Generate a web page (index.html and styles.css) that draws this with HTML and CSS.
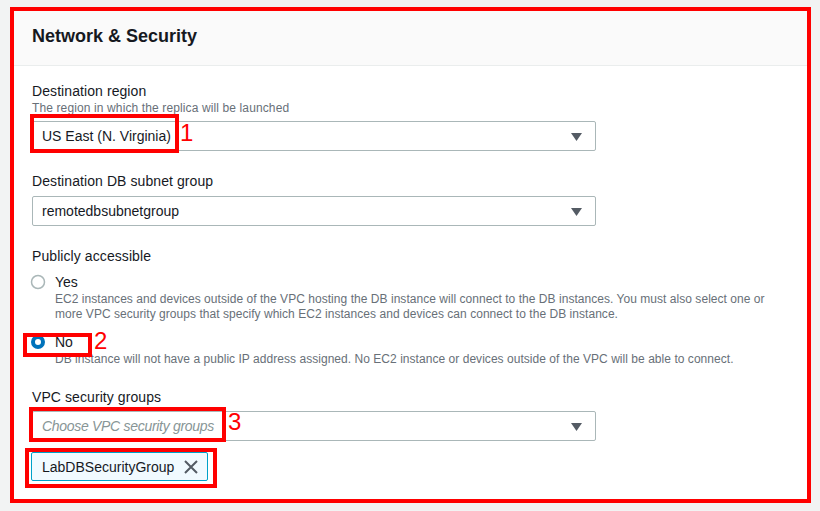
FILE: index.html
```html
<!DOCTYPE html>
<html lang="en">
<head>
<meta charset="utf-8">
<title>Network &amp; Security</title>
<link rel="stylesheet" href="styles.css">
</head>
<body>
<div class="page">
  <section class="card">
    <div class="card-header">
      <h2 class="card-title">Network &amp; Security</h2>
    </div>
    <div class="card-body">

      <div class="field">
        <div class="label">Destination region</div>
        <div class="desc desc-under-label">The region in which the replica will be launched</div>
        <div class="select">
          <span class="select-value">US East (N. Virginia)</span>
          <svg class="caret" width="11" height="8" viewBox="0 0 11 8"><polygon points="0,0 11,0 5.5,8" fill="#545b64"/></svg>
          <span class="mark mark-1"></span>
          <span class="num num-1">1</span>
        </div>
      </div>

      <div class="field">
        <div class="label">Destination DB subnet group</div>
        <div class="select">
          <span class="select-value">remotedbsubnetgroup</span>
          <svg class="caret" width="11" height="8" viewBox="0 0 11 8"><polygon points="0,0 11,0 5.5,8" fill="#545b64"/></svg>
        </div>
      </div>

      <div class="field">
        <div class="label">Publicly accessible</div>
        <div class="radio-item radio-first">
          <div class="radio-row">
            <svg class="radio" width="16" height="16" viewBox="0 0 16 16"><circle cx="8" cy="8" r="6.5" fill="#fff" stroke="#aab7b8" stroke-width="1.5"/></svg>
            <span class="radio-text">Yes</span>
          </div>
          <div class="desc radio-desc">EC2 instances and devices outside of the VPC hosting the DB instance will connect to the DB instances. You must also select one or more VPC security groups that specify which EC2 instances and devices can connect to the DB instance.</div>
        </div>
        <div class="radio-item radio-next">
          <div class="radio-row">
            <svg class="radio" width="16" height="16" viewBox="0 0 16 16"><circle cx="8" cy="8" r="5" fill="#fff" stroke="#0073bb" stroke-width="4"/></svg>
            <span class="radio-text">No</span>
            <span class="mark mark-2"></span>
            <span class="num num-2">2</span>
          </div>
          <div class="desc radio-desc">DB instance will not have a public IP address assigned. No EC2 instance or devices outside of the VPC will be able to connect.</div>
        </div>
      </div>

      <div class="field">
        <div class="label">VPC security groups</div>
        <div class="select select-tight">
          <span class="select-placeholder">Choose VPC security groups</span>
          <svg class="caret" width="11" height="8" viewBox="0 0 11 8"><polygon points="0,0 11,0 5.5,8" fill="#545b64"/></svg>
          <span class="mark mark-3"></span>
          <span class="num num-3">3</span>
        </div>
        <div class="token">
          <span class="token-text">LabDBSecurityGroup</span>
          <svg class="token-x" width="16" height="16" viewBox="0 0 16 16"><path d="M2 2 L14 14 M14 2 L2 14" stroke="#545b64" stroke-width="2" fill="none"/></svg>
          <span class="mark mark-4"></span>
        </div>
      </div>

    </div>
  </section>
</div>
</body>
</html>
```

FILE: styles.css
```css
html, body {
  margin: 0;
  padding: 0;
}

body {
  background: #f2f3f3;
  font-family: "Liberation Sans", Arial, sans-serif;
  color: #16191f;
}

.page {
  padding: 7px 9px 8px 10px;
}

.card {
  box-sizing: border-box;
  height: 496px;
  background: #ffffff;
  border: 4px solid #ff0000;
}

.card-header {
  box-sizing: border-box;
  height: 55px;
  padding: 14px 18px 0;
  background: #fafafa;
  border-bottom: 1px solid #eaeded;
}

.card-title {
  margin: 0;
  font-size: 18px;
  line-height: 22px;
  font-weight: 700;
  color: #16191f;
}

.card-body {
  padding: 15px 18px 0;
}

.field + .field {
  margin-top: 20px;
}

.label {
  font-size: 14px;
  line-height: 20px;
  color: #16191f;
  letter-spacing: 0.08px;
}

.desc {
  font-size: 12px;
  line-height: 15px;
  color: #687078;
  letter-spacing: 0.04px;
}

.desc-under-label {
  margin-top: -1px;
  line-height: 16px;
  letter-spacing: 0.12px;
}

.select {
  position: relative;
  box-sizing: border-box;
  width: 564px;
  height: 30px;
  margin-top: 5px;
  padding: 0 13px 0 9px;
  display: flex;
  align-items: center;
  justify-content: space-between;
  border: 1px solid #aab7b8;
  border-radius: 2px;
  background: #ffffff;
  font-size: 14px;
}

.select-tight {
  margin-top: 4px;
}

.select-value {
  color: #16191f;
}

.select-placeholder {
  color: #879596;
  font-style: italic;
  letter-spacing: -0.3px;
}

.caret {
  display: block;
  margin-top: 1px;
}

.radio-first {
  margin-top: 6px;
}

.radio-next {
  margin-top: 10px;
}

.radio-row {
  position: relative;
  display: flex;
  align-items: center;
  height: 20px;
  font-size: 14px;
}

.radio {
  display: block;
  margin-left: -2px;
  margin-right: 9px;
}

.radio-text {
  line-height: 20px;
}

.radio-desc {
  margin-left: 23px;
  padding-right: 20px;
}

.token {
  position: relative;
  box-sizing: border-box;
  display: inline-flex;
  align-items: center;
  height: 29px;
  margin-top: 11px;
  margin-left: -1px;
  padding: 0 8px 0 10px;
  border: 1px solid #00a1c9;
  border-radius: 2px;
  background: #f1faff;
  font-size: 14px;
}

.token-x {
  display: block;
  margin-left: 9px;
}

/* annotation overlays */
.mark {
  position: absolute;
  box-sizing: border-box;
  border: 4px solid #ff0000;
}

.mark-1 {
  left: -3px;
  top: -8px;
  width: 149px;
  height: 39px;
}

.mark-2 {
  left: -9px;
  top: 1px;
  width: 69px;
  height: 24px;
}

.mark-3 {
  left: -4px;
  top: -5px;
  width: 197px;
  height: 35px;
}

.mark-4 {
  left: -7px;
  top: -5px;
  width: 192px;
  height: 40px;
}

.num {
  position: absolute;
  font-family: "Liberation Sans", Arial, sans-serif;
  font-size: 24px;
  line-height: 24px;
  font-weight: 400;
  font-style: normal;
  letter-spacing: 0;
  color: #ff0000;
}

.num-1 {
  left: 147px;
  top: -1px;
}

.num-2 {
  left: 62px;
  top: -3px;
}

.num-3 {
  left: 195px;
  top: -2px;
}
```
